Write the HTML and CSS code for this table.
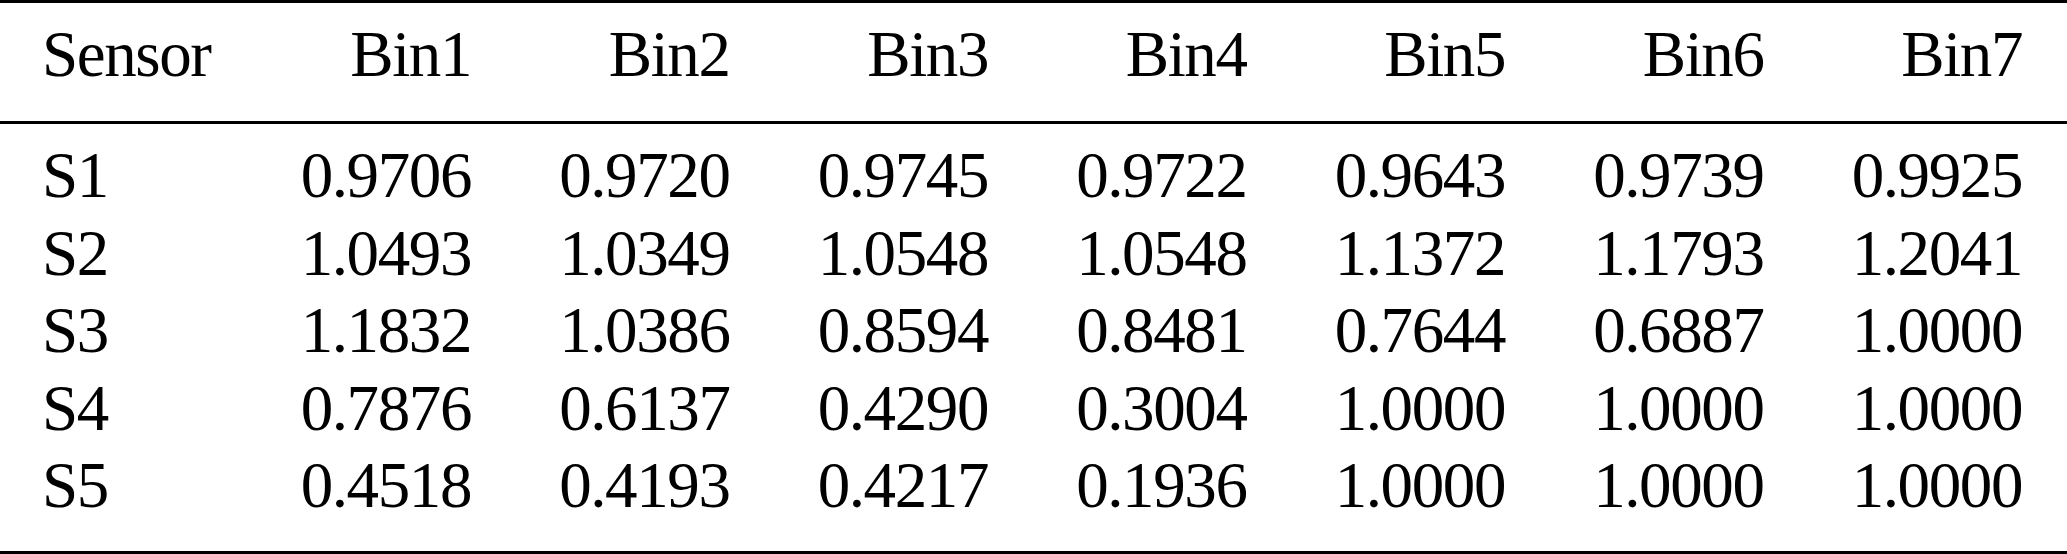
FILE: index.html
```html
<!DOCTYPE html>
<html>

<head>
  <title>Sensor bins</title>
  <meta charset="UTF-8">
  <link rel="stylesheet" href="styles.css">
</head>

<body>
  <table class="binTable">
    <colgroup>
      <col class="sensorCol">
      <col span="7">
    </colgroup>
    <thead>
      <tr>
        <th class="sensorCell">Sensor</th>
        <th>Bin1</th>
        <th>Bin2</th>
        <th>Bin3</th>
        <th>Bin4</th>
        <th>Bin5</th>
        <th>Bin6</th>
        <th>Bin7</th>
      </tr>
    </thead>
    <tbody>
      <tr class="firstRow">
        <td class="sensorCell">S1</td>
        <td>0.9706</td>
        <td>0.9720</td>
        <td>0.9745</td>
        <td>0.9722</td>
        <td>0.9643</td>
        <td>0.9739</td>
        <td>0.9925</td>
      </tr>
      <tr>
        <td class="sensorCell">S2</td>
        <td>1.0493</td>
        <td>1.0349</td>
        <td>1.0548</td>
        <td>1.0548</td>
        <td>1.1372</td>
        <td>1.1793</td>
        <td>1.2041</td>
      </tr>
      <tr>
        <td class="sensorCell">S3</td>
        <td>1.1832</td>
        <td>1.0386</td>
        <td>0.8594</td>
        <td>0.8481</td>
        <td>0.7644</td>
        <td>0.6887</td>
        <td>1.0000</td>
      </tr>
      <tr>
        <td class="sensorCell">S4</td>
        <td>0.7876</td>
        <td>0.6137</td>
        <td>0.4290</td>
        <td>0.3004</td>
        <td>1.0000</td>
        <td>1.0000</td>
        <td>1.0000</td>
      </tr>
      <tr class="lastRow">
        <td class="sensorCell">S5</td>
        <td>0.4518</td>
        <td>0.4193</td>
        <td>0.4217</td>
        <td>0.1936</td>
        <td>1.0000</td>
        <td>1.0000</td>
        <td>1.0000</td>
      </tr>
    </tbody>
  </table>
</body>

</html>
```

FILE: styles.css
```css
body {
  margin: 0;
  background: #fff;
}

table.binTable {
  width: 2067px;
  table-layout: fixed;
  border-collapse: separate;
  border-spacing: 0;
  border-top: 3px solid #000;
  border-bottom: 3px solid #000;
  font-family: "Liberation Serif", "Times New Roman", serif;
  font-size: 65px;
  letter-spacing: -1.4px;
  color: #000;
}

col.sensorCol {
  width: 257.5px;
}

.binTable th,
.binTable td {
  font-weight: normal;
  line-height: 77.5px;
  padding: 0 45px 0 0;
  text-align: right;
  white-space: nowrap;
}

.binTable th {
  padding-top: 13px;
  padding-bottom: 27.5px;
  border-bottom: 3px solid #000;
}

.binTable .sensorCell {
  text-align: left;
  padding-left: 42px;
  padding-right: 0;
}

tr.firstRow td {
  padding-top: 13px;
}

tr.lastRow td {
  padding-bottom: 26.5px;
}
```
